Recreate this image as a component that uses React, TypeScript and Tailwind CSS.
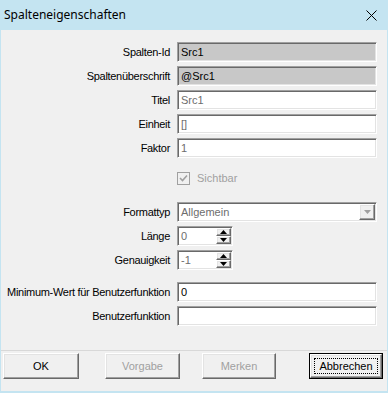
import React from "react";

const sunken =
  "border border-t-[#a0a0a0] border-l-[#a0a0a0] border-b-white border-r-white shadow-[inset_1px_1px_0_#696969,inset_-1px_-1px_0_#e3e3e3]";
const raised =
  "border border-t-white border-l-white border-b-[#696969] border-r-[#696969] shadow-[inset_-1px_-1px_0_#a0a0a0,inset_1px_1px_0_#e3e3e3]";

function Label({ children }: { children: React.ReactNode }) {
  return (
    <div className="flex items-center justify-end pr-[7px] text-[11px] tracking-[-0.3px] text-black whitespace-nowrap">
      {children}
    </div>
  );
}

function Field({
  value,
  bg = "bg-white",
  color = "text-black",
}: {
  value: string;
  bg?: string;
  color?: string;
}) {
  return (
    <div className={`h-[20px] w-[200px] flex items-center pl-[3px] text-[11px] ${bg} ${color} ${sunken}`}>
      {value}
    </div>
  );
}

function Spinner({ value }: { value: string }) {
  return (
    <div className={`h-[20px] w-[56px] flex items-center justify-between pl-[3px] pr-[1px] bg-white text-[11px] text-[#6d6d6d] ${sunken}`}>
      <span>{value}</span>
      <div className="flex flex-col h-[16px] w-[15px]">
        <div className={`flex-1 bg-[#f0f0f0] flex items-center justify-center ${raised}`}>
          <svg width="7" height="4" viewBox="0 0 7 4">
            <path d="M0 4 L3.5 0 L7 4 Z" fill="#000" />
          </svg>
        </div>
        <div className={`flex-1 bg-[#f0f0f0] flex items-center justify-center ${raised}`}>
          <svg width="7" height="4" viewBox="0 0 7 4">
            <path d="M0 0 L3.5 4 L7 0 Z" fill="#000" />
          </svg>
        </div>
      </div>
    </div>
  );
}

function Button({
  label,
  width,
  disabled,
  isDefault,
}: {
  label: string;
  width: string;
  disabled?: boolean;
  isDefault?: boolean;
}) {
  if (isDefault) {
    return (
      <div className={`${width} h-[26px] border border-black`}>
        <div className={`w-full h-full p-[3px] bg-[#f0f0f0] ${raised}`}>
          <div className="w-full h-full border border-dotted border-black flex items-center justify-center text-[11px] text-black">
            {label}
          </div>
        </div>
      </div>
    );
  }
  return (
    <div
      className={`${width} h-[26px] flex items-center justify-center bg-[#f0f0f0] text-[11px] ${raised} ${
        disabled ? "text-[#a0a0a0]" : "text-black"
      }`}
    >
      {label}
    </div>
  );
}

export default function App() {
  return (
    <div className="w-[388px] h-[393px] bg-[#f0f0f0] border-x border-b-2 border-[#c4e4f1] flex flex-col font-['Liberation_Sans',Arial,sans-serif]">
      <div className="h-[30px] shrink-0 bg-[#c4e4f1] flex items-center justify-between pl-[4px] pr-[11px] -mx-px">
        <span className="text-[12px] text-black font-['Noto_Sans',sans-serif]">Spalteneigenschaften</span>
        <svg width="11" height="11" viewBox="0 0 11 11">
          <path d="M0.5 0.5 L10.5 10.5 M10.5 0.5 L0.5 10.5" stroke="#000" strokeWidth="1" />
        </svg>
      </div>

      <div className="grid grid-cols-[176px_200px] gap-y-[4px] mt-[12px]">
        <Label>Spalten-Id</Label>
        <Field value="Src1" bg="bg-[#c8c8c8]" />
        <Label>Spaltenüberschrift</Label>
        <Field value="@Src1" bg="bg-[#c8c8c8]" />
        <Label>Titel</Label>
        <Field value="Src1" color="text-[#6d6d6d]" />
        <Label>Einheit</Label>
        <Field value="[]" color="text-[#6d6d6d]" />
        <Label>Faktor</Label>
        <Field value="1" color="text-[#6d6d6d]" />
      </div>

      <div className="flex items-center ml-[176px] mt-[14px] h-[13px]">
        <div className="w-[13px] h-[13px] bg-[#f0f0f0] flex items-center justify-center border border-[#a0a0a0]">
          <svg width="9" height="9" viewBox="0 0 9 9">
            <path d="M1 4 L3.5 6.5 L8 1.5" stroke="#a0a0a0" strokeWidth="1.6" fill="none" />
          </svg>
        </div>
        <span className="ml-[7px] text-[11px] text-[#a0a0a0]">Sichtbar</span>
      </div>

      <div className="grid grid-cols-[176px_200px] gap-y-[4px] mt-[17px]">
        <Label>Formattyp</Label>
        <div className={`h-[20px] w-[200px] flex items-center justify-between pl-[3px] pr-[1px] bg-white text-[11px] text-[#6d6d6d] ${sunken}`}>
          <span>Allgemein</span>
          <div className={`w-[16px] h-[16px] bg-[#f0f0f0] flex items-center justify-center ${raised}`}>
            <svg width="7" height="4" viewBox="0 0 7 4">
              <path d="M0 0 L3.5 4 L7 0 Z" fill="#a0a0a0" />
            </svg>
          </div>
        </div>
        <Label>Länge</Label>
        <Spinner value="0" />
        <Label>Genauigkeit</Label>
        <Spinner value="-1" />
      </div>

      <div className="grid grid-cols-[176px_200px] gap-y-[4px] mt-[12px]">
        <Label>Minimum-Wert für Benutzerfunktion</Label>
        <Field value="0" />
        <Label>Benutzerfunktion</Label>
        <Field value="" />
      </div>

      <div className="mt-[24px] border-t border-[#d8d8d8] h-px bg-white" />

      <div className="flex items-center pl-[2px] mt-[2px]">
        <Button label="OK" width="w-[76px]" />
        <div className="ml-[26px]">
          <Button label="Vorgabe" width="w-[75px]" disabled />
        </div>
        <div className="ml-[22px]">
          <Button label="Merken" width="w-[74px]" disabled />
        </div>
        <div className="ml-[33px]">
          <Button label="Abbrechen" width="w-[74px]" isDefault />
        </div>
      </div>
    </div>
  );
}
